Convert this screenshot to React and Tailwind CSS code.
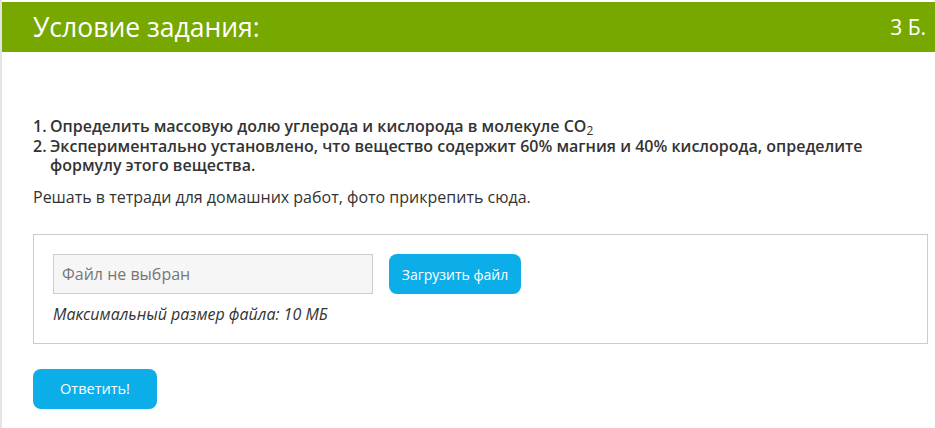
export default function App() {
  return (
    <div className="w-[935px] h-[428px] overflow-hidden bg-white border-l-2 border-[#e4e4e4] pt-[2px] bg-clip-padding" style={{ fontFamily: '"Open Sans", sans-serif' }}>
      <div className="h-[50px] bg-[#77a800] flex items-center justify-between pl-[31px] pr-[9px] text-white">
        <span className="text-[26.5px] leading-none">Условие задания:</span>
        <span className="text-[21px] leading-none">3 Б.</span>
      </div>
      <div className="pl-[31px] pr-[7px] pt-[65px] text-[#333]">
        <div className="text-[16px] leading-[19px] font-semibold">
          <div className="flex">
            <span className="w-[17px] shrink-0">1.</span>
            <span>Определить массовую долю углерода и кислорода в молекуле CO<span className="text-[12px] leading-none font-normal align-[-3px]">2</span></span>
          </div>
          <div className="flex">
            <span className="w-[17px] shrink-0">2.</span>
            <span className="w-[840px]">Экспериментально установлено, что вещество содержит 60% магния и 40% кислорода, определите формулу этого вещества.</span>
          </div>
        </div>
        <p className="text-[16px] leading-[20px] mt-[12px]">Решать в тетради для домашних работ, фото прикрепить сюда.</p>
        <div className="mt-[27px] border border-[#cccccc] h-[110px] pl-[19px] pt-[19px]">
          <div className="flex items-center gap-[16px]">
            <div className="w-[320px] h-[40px] bg-[#f6f6f6] border border-[#cccccc] flex items-center pl-[8px] text-[16px] text-[#777]">Файл не выбран</div>
            <button className="h-[40px] w-[132px] rounded-[8px] bg-[#0caee9] text-white text-[14px]">Загрузить файл</button>
          </div>
          <div className="mt-[8px] italic text-[16px] text-[#333]">Максимальный размер файла: 10 МБ</div>
        </div>
        <button className="mt-[25px] h-[40px] w-[124px] rounded-[8px] bg-[#0caee9] text-white text-[14.5px]">Ответить!</button>
      </div>
    </div>
  );
}
